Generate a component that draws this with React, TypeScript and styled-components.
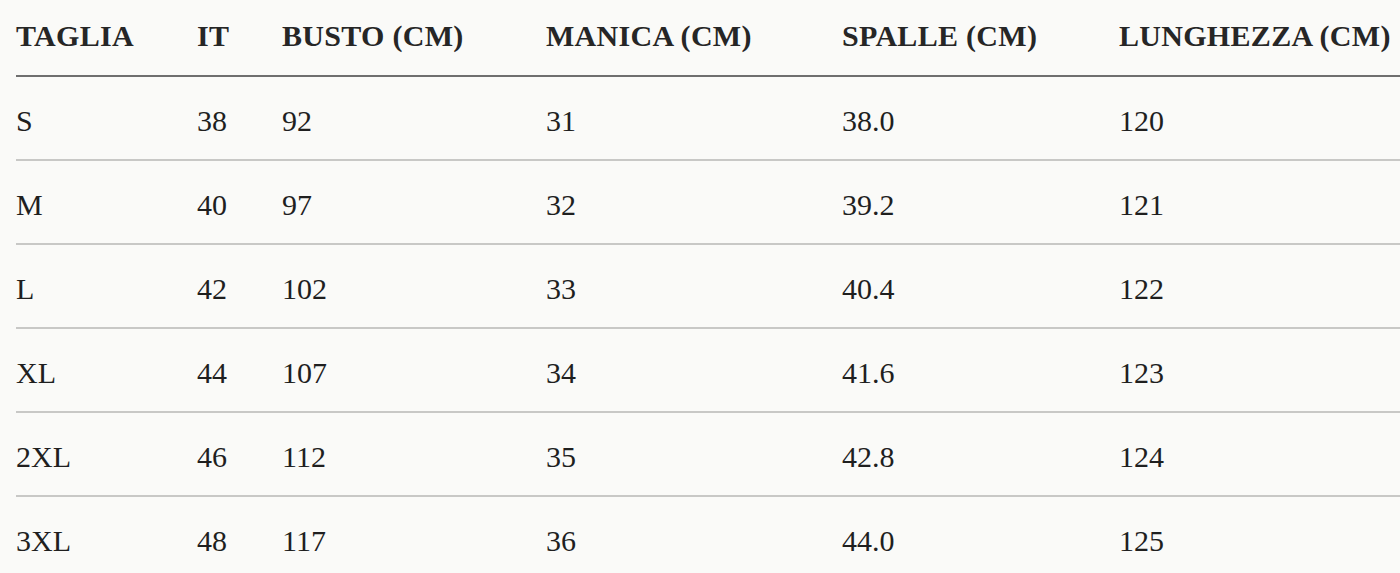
import styled, { createGlobalStyle } from 'styled-components';

const GlobalStyle = createGlobalStyle`
  html, body {
    margin: 0;
    padding: 0;
    background: #fafaf8;
    overflow: hidden;
  }
`;

const Wrapper = styled.div`
  padding-left: 16px;
  width: 1400px;
  height: 573px;
  box-sizing: border-box;
  overflow: hidden;
  background: #fafaf8;
  font-family: "Liberation Serif", "Times New Roman", serif;
  color: #1f1f1f;
`;

const Table = styled.table`
  border-collapse: collapse;
  table-layout: fixed;
  width: 1420px;
`;

const HeadCell = styled.th`
  height: 76px;
  padding: 0 0 4px 0;
  box-sizing: border-box;
  text-align: left;
  vertical-align: middle;
  font-size: 30px;
  font-weight: 700;
  letter-spacing: 0.3px;
  white-space: nowrap;
  color: #262626;
  border-bottom: 2px solid #6f6f6f;
`;

const Cell = styled.td`
  height: 84px;
  padding: 6px 0 0 0;
  box-sizing: border-box;
  text-align: left;
  vertical-align: middle;
  font-size: 30px;
  font-weight: 400;
  white-space: nowrap;
  border-bottom: 2px solid #c8c8c6;
`;

const columns = [
  { label: 'TAGLIA', width: 181 },
  { label: 'IT', width: 85 },
  { label: 'BUSTO (CM)', width: 264 },
  { label: 'MANICA (CM)', width: 296 },
  { label: 'SPALLE (CM)', width: 277 },
  { label: 'LUNGHEZZA (CM)', width: 317 },
];

const rows = [
  ['S', '38', '92', '31', '38.0', '120'],
  ['M', '40', '97', '32', '39.2', '121'],
  ['L', '42', '102', '33', '40.4', '122'],
  ['XL', '44', '107', '34', '41.6', '123'],
  ['2XL', '46', '112', '35', '42.8', '124'],
  ['3XL', '48', '117', '36', '44.0', '125'],
];

export default function App() {
  return (
    <>
      <GlobalStyle />
      <Wrapper>
        <Table>
          <colgroup>
            {columns.map(({ label, width }) => (
              <col key={label} style={{ width }} />
            ))}
          </colgroup>
          <thead>
            <tr>
              {columns.map(({ label }) => (
                <HeadCell key={label}>{label}</HeadCell>
              ))}
            </tr>
          </thead>
          <tbody>
            {rows.map((row) => (
              <tr key={row[0]}>
                {row.map((value, i) => (
                  <Cell key={i}>{value}</Cell>
                ))}
              </tr>
            ))}
          </tbody>
        </Table>
      </Wrapper>
    </>
  );
}
